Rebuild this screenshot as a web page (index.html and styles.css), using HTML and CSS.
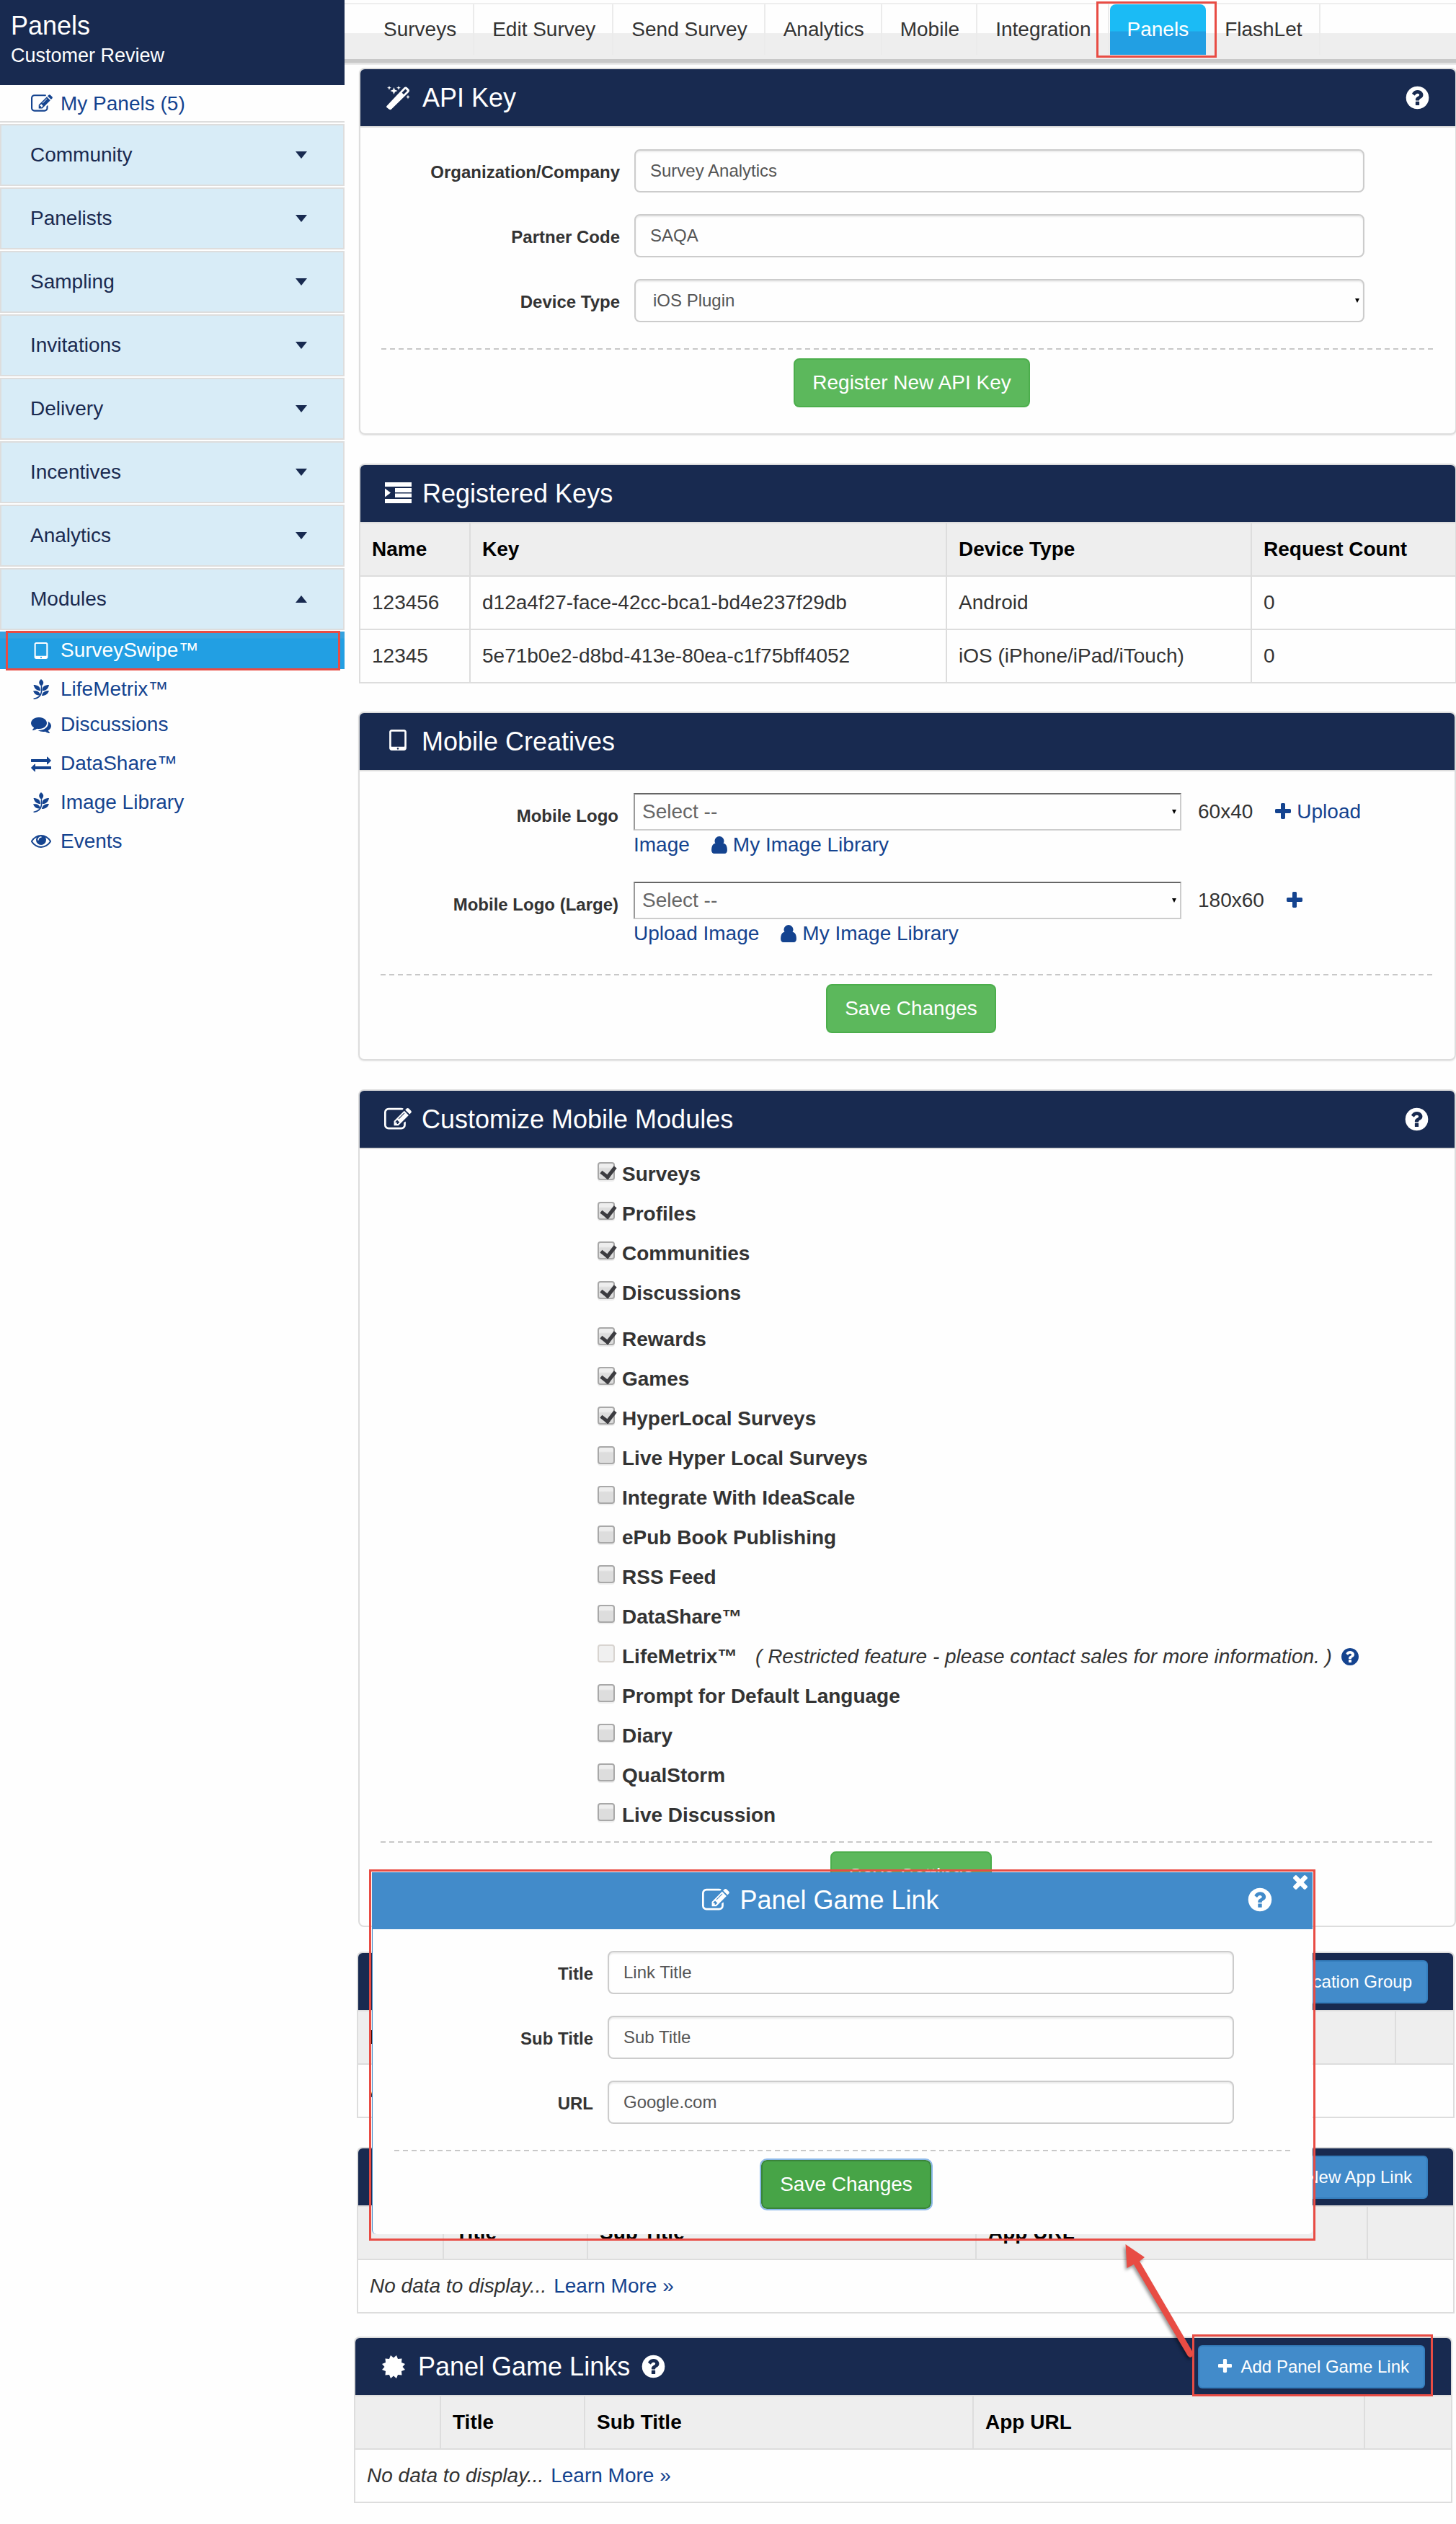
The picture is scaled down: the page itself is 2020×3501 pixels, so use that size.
FILE: index.html
```html
<!DOCTYPE html>
<html lang="en">
<head>
    <meta charset="UTF-8">
    <title>Panels - Customer Review</title>
    <link rel="stylesheet" href="styles.css">
</head>
<body>
    <!-- icon set -->
    <svg class="sprite" width="0" height="0">
        <symbol id="i-edit" viewBox="0 0 1792 1792"><path d="M888 1184l116-116-152-152-116 116v56h96v96h56zm440-720q-16-16-33 1l-350 350q-17 17-1 33t33-1l350-350q17-17 1-33zm80 594v190q0 119-84.5 203.5t-203.5 84.5h-832q-119 0-203.5-84.5t-84.5-203.5v-832q0-119 84.5-203.5t203.5-84.5h832q63 0 117 25 15 7 18 23 3 17-9 29l-49 49q-14 14-32 8-23-6-45-6h-832q-66 0-113 47t-47 113v832q0 66 47 113t113 47h832q66 0 113-47t47-113v-126q0-13 9-22l64-64q15-15 35-7t20 29zm-96-738l288 288-672 672h-288v-288zm444 132l-92 92-288-288 92-92q28-28 68-28t68 28l152 152q28 28 28 68t-28 68z"/></symbol>
        <symbol id="i-help" viewBox="0 0 1792 1792"><path d="M1024 1376v-192q0-14-9-23t-23-9h-192q-14 0-23 9t-9 23v192q0 14 9 23t23 9h192q14 0 23-9t9-23zm256-672q0-88-55.5-163t-138.5-116-170-41q-243 0-371 213-15 24 8 42l132 100q7 6 19 6 16 0 25-12 53-68 86-92 34-24 86-24 48 0 85.5 26t37.5 59q0 38-20 61t-68 45q-63 28-115.5 86.5t-52.5 125.5v36q0 14 9 23t23 9h192q14 0 23-9t9-23q0-19 21.5-49.5t54.5-49.5q32-18 49-28.5t46-35 44.5-48 28-60.5 12.5-81zm384 192q0 209-103 385.5t-279.5 279.5-385.5 103-385.5-103-279.5-279.5-103-385.5 103-385.5 279.5-279.5 385.5-103 385.5 103 279.5 279.5 103 385.5z"/></symbol>
        <symbol id="i-plus" viewBox="192 128 1408 1408"><path d="M1600 736v192q0 40-28 68t-68 28h-416v416q0 40-28 68t-68 28h-192q-40 0-68-28t-28-68v-416h-416q-40 0-68-28t-28-68v-192q0-40 28-68t68-28h416v-416q0-40 28-68t68-28h192q40 0 68 28t28 68v416h416q40 0 68 28t28 68z"/></symbol>
        <symbol id="i-user" viewBox="256 256 1280 1408"><path d="M1536 1399q0 109-62.5 187t-150.5 78h-854q-88 0-150.5-78t-62.5-187q0-85 8.500-160.500t31.500-152 58.500-131 94-89 134.500-34.500q131 128 313 128t313-128q76 0 134.500 34.500t94 89 58.500 131 31.500 152 8.500 160.500zm-256-759q0 159-112.500 271.500t-271.500 112.500-271.500-112.500-112.500-271.500 112.500-271.500 271.500-112.500 271.500 112.500 112.500 271.500z"/></symbol>
        <symbol id="i-tablet" viewBox="320 128 1152 1408"><path d="M960 1408q0-26-19-45t-45-19-45 19-19 45 19 45 45 19 45-19 19-45zm384-160v-960q0-13-9.5-22.5t-22.5-9.5h-832q-13 0-22.5 9.500t-9.500 22.500v960q0 13 9.500 22.500t22.500 9.500h832q13 0 22.500-9.500t9.500-22.500zm128-960v1088q0 66-47 113t-113 47h-832q-66 0-113-47t-47-113v-1088q0-66 47-113t113-47h832q66 0 113 47t47 113z"/></symbol>
        <symbol id="i-times" viewBox="302 366 1188 1188"><path d="M1490 1322q0 40-28 68l-136 136q-28 28-68 28t-68-28l-294-294-294 294q-28 28-68 28t-68-28l-136-136q-28-28-28-68t28-68l294-294-294-294q-28-28-28-68t28-68l136-136q28-28 68-28t68 28l294 294 294-294q28-28 68-28t68 28l136 136q28 28 28 68t-28 68l-294 294 294 294q28 28 28 68z"/></symbol>
        <symbol id="i-eye" viewBox="0 64 1792 1792"><path d="M1664 960q-152-236-381-353 61 104 61 225 0 185-131.500 316.500t-316.500 131.500-316.500-131.500-131.500-316.500q0-121 61-225-229 117-381 353 133 205 333.500 326.500t434.500 121.500 434.500-121.500 333.500-326.500zm-720-384q0-20-14-34t-34-14q-125 0-214.500 89.500t-89.500 214.500q0 20 14 34t34 14 34-14 14-34q0-86 61-147t147-61q20 0 34-14t14-34zm848 384q0 34-20 69-140 230-376.500 368.500t-499.500 138.500-499.500-139-376.500-368q-20-35-20-69t20-69q140-229 376.500-368t499.500-139 499.500 139 376.500 368q20 35 20 69z"/></symbol>
        <symbol id="i-exchange" viewBox="0 0 1792 1792"><path d="M1792 1184v192q0 13-9.5 22.500t-22.500 9.500h-1376v192q0 13-9.500 22.500t-22.500 9.500q-12 0-24-10l-319-320q-9-9-9-22 0-14 9-23l320-320q9-9 23-9 13 0 22.500 9.500t9.500 22.500v192h1376q13 0 22.500 9.500t9.500 22.500zm0-544q0 14-9 23l-320 320q-9 9-23 9-13 0-22.500-9.500t-9.500-22.500v-192h-1376q-13 0-22.500-9.500t-9.500-22.500v-192q0-13 9.500-22.500t22.500-9.500h1376v-192q0-14 9-23t23-9q12 0 24 10l319 319q9 9 9 23z"/></symbol>
        <symbol id="i-comments" viewBox="0 0 1792 1792"><path d="M1408 768q0 139-94 257t-256.500 186.500-353.500 68.500q-86 0-176-16-124 88-278 128-36 9-86 16h-3q-11 0-20.500-8t-11.500-21q-1-3-1-6.500t.5-6.500 2-6l2.500-5 3.500-5.500 4-5 4.500-5 4-4.500q5-6 23-25t26-29.500 22.500-29 25-38.500 20.500-44q-124-72-195-177t-71-224q0-139 94-257t256.500-186.500 353.500-68.500 353.500 68.500 256.500 186.500 94 257zm384 256q0 120-71 224.500t-195 176.500q10 24 20.500 44t25 38.500 22.500 29 26 29.500 23 25q1 1 4 4.500t4.500 5 4 5 3.500 5.500l2.500 5 2 6 .5 6.500-1 6.500q-3 14-13 22t-22 7q-50-7-86-16-154-40-278-128-90 16-176 16-271 0-472-132 58 4 88 4 161 0 309-45t264-129q125-92 192-212t67-254q0-77-23-152 129 71 204 178t75 230z"/></symbol>
        <symbol id="i-leaf" viewBox="0 0 22 28"><path d="M11 0c4 3 4.500 6 0.500 10c-4-3-4.500-7-0.500-10zM12.500 16c0-6 4-8 9.500-8c-1 6-5 8.500-9.500 8zM10 16c-4.500 0-8-2-9.500-8c5 0 9.500 2 9.500 8zM12 23c1-5.500 5-7 10-7c-2 6-6 7-10 7zM10 22c-4 1.500-8-0.500-10-5.500c5-1 9 1 10 5.500z"/><path d="M11.500 10V18Q10 26 0.500 27.500" fill="none" stroke="currentColor" stroke-width="1.600"/></symbol>
        <symbol id="i-wand" viewBox="0 0 36 34"><path fill-rule="evenodd" d="M1.500 28L25.500 2.500Q28 0.500 30 2.500L32.500 5Q34 7 32 9L8 32.500Q6 34 4 32L1.500 30Q0.500 29 1.500 28zM22.500 9.500L25 12L30 7L27.500 4.500z"/><path d="M5 0l.8 2 2.200.8-2.200.8L5 6l-.8-2.400L2 2.800 4.200 2zM18 0l.8 2 2.200.8-2.200.8L18 6l-.8-2.400L15 2.800 17.200 2zM11.500 2l1.400 3.600 3.600 1.400-3.600 1.400-1.400 3.600-1.400-3.600L6.500 7l3.600-1.400zM31 12.500l.8 2.200 2.200.8-2.200.8-.8 2.200-.8-2.200-2.200-.8 2.200-.8z"/></symbol>
        <symbol id="i-indent" viewBox="0 0 37 29"><path d="M0 0h37v6H0zM14 8h23v6H14zM14 15.500h23v5.500H14zM0 23h37v6H0zM0 8.500L8 14.500L0 20.500z"/></symbol>
        <symbol id="i-cert" viewBox="-16 -16 32 32"><path d="M-4-16L0-12.500L4-16L6-11L11.500-11.500L11-6L16-4L12.500 0L16 4L11 6L11.500 11.500L6 11L4 16L0 12.500L-4 16L-6 11L-11.500 11.500L-11 6L-16 4L-12.500 0L-16-4L-11-6L-11.500-11.500L-6-11Z"/></symbol>
    </svg>

    <div class="page">
        <aside class="sidebar">
            <div class="brand">
                <h1>Panels</h1>
                <p>Customer Review</p>
            </div>
            <a class="my-panels"><svg><use href="#i-edit"/></svg>My Panels (5)</a>
            <div class="menu">
                <div class="menu-item">Community<i class="caret"></i></div>
                <div class="menu-item">Panelists<i class="caret"></i></div>
                <div class="menu-item">Sampling<i class="caret"></i></div>
                <div class="menu-item">Invitations<i class="caret"></i></div>
                <div class="menu-item">Delivery<i class="caret"></i></div>
                <div class="menu-item">Incentives<i class="caret"></i></div>
                <div class="menu-item">Analytics<i class="caret"></i></div>
                <div class="menu-item">Modules<i class="caret up"></i></div>
            </div>
            <div class="submenu">
                <a class="active"><svg class="tablet"><use href="#i-tablet"/></svg>SurveySwipe™<span class="mark"></span></a>
                <a><svg><use href="#i-leaf"/></svg>LifeMetrix™</a>
                <a class="tight"><svg><use href="#i-comments"/></svg>Discussions</a>
                <a><svg><use href="#i-exchange"/></svg>DataShare™</a>
                <a><svg><use href="#i-leaf"/></svg>Image Library</a>
                <a><svg><use href="#i-eye"/></svg>Events</a>
            </div>
        </aside>

        <main class="main">
            <nav class="topnav">
                <a>Surveys</a>
                <a>Edit Survey</a>
                <a>Send Survey</a>
                <a>Analytics</a>
                <a>Mobile</a>
                <a>Integration</a>
                <a class="active">Panels<span class="mark"></span></a>
                <a>FlashLet</a>
            </nav>

            <section class="panel api-key">
                <div class="panel-head"><svg class="wand"><use href="#i-wand"/></svg><h2>API Key</h2><svg class="help"><use href="#i-help"/></svg></div>
                <div class="panel-body">
                    <div class="row"><label>Organization/Company</label><div class="field">Survey Analytics</div></div>
                    <div class="row"><label>Partner Code</label><div class="field">SAQA</div></div>
                    <div class="row"><label>Device Type</label><div class="field drop">iOS Plugin<i class="tick"></i></div></div>
                    <div class="dashes"></div>
                    <button class="btn">Register New API Key</button>
                </div>
            </section>

            <section class="panel keys">
                <div class="panel-head"><svg class="indent"><use href="#i-indent"/></svg><h2>Registered Keys</h2></div>
                <table>
                    <colgroup><col class="c-name"><col class="c-key"><col class="c-device"><col></colgroup>
                    <tr><th>Name</th><th>Key</th><th>Device Type</th><th>Request Count</th></tr>
                    <tr><td>123456</td><td>d12a4f27-face-42cc-bca1-bd4e237f29db</td><td>Android</td><td>0</td></tr>
                    <tr><td>12345</td><td>5e71b0e2-d8bd-413e-80ea-c1f75bff4052</td><td>iOS (iPhone/iPad/iTouch)</td><td>0</td></tr>
                </table>
            </section>

            <section class="panel creatives">
                <div class="panel-head"><svg class="tablet"><use href="#i-tablet"/></svg><h2>Mobile Creatives</h2></div>
                <div class="panel-body">
                    <div class="row">
                        <label>Mobile Logo</label>
                        <div class="logo">
                            <div class="line"><div class="select">Select --<i class="tick"></i></div><span class="size">60x40</span><a><svg class="plus"><use href="#i-plus"/></svg>Upload</a></div>
                            <div class="line links"><a>Image</a><a><svg class="user"><use href="#i-user"/></svg>My Image Library</a></div>
                        </div>
                    </div>
                    <div class="row">
                        <label>Mobile Logo (Large)</label>
                        <div class="logo">
                            <div class="line"><div class="select">Select --<i class="tick"></i></div><span class="size">180x60</span><a><svg class="plus"><use href="#i-plus"/></svg></a></div>
                            <div class="line links"><a>Upload Image</a><a><svg class="user"><use href="#i-user"/></svg>My Image Library</a></div>
                        </div>
                    </div>
                    <div class="dashes"></div>
                    <button class="btn">Save Changes</button>
                </div>
            </section>

            <section class="panel modules">
                <div class="panel-head"><svg class="edit"><use href="#i-edit"/></svg><h2>Customize Mobile Modules</h2><svg class="help"><use href="#i-help"/></svg></div>
                <div class="panel-body">
                    <ul class="checks">
                        <li class="on"><i></i>Surveys</li>
                        <li class="on"><i></i>Profiles</li>
                        <li class="on"><i></i>Communities</li>
                        <li class="on"><i></i>Discussions</li>
                        <li class="on spaced"><i></i>Rewards</li>
                        <li class="on"><i></i>Games</li>
                        <li class="on"><i></i>HyperLocal Surveys</li>
                        <li><i></i>Live Hyper Local Surveys</li>
                        <li><i></i>Integrate With IdeaScale</li>
                        <li><i></i>ePub Book Publishing</li>
                        <li><i></i>RSS Feed</li>
                        <li><i></i>DataShare™</li>
                        <li class="off"><i></i>LifeMetrix™ <em>( Restricted feature - please contact sales for more information. )</em><svg><use href="#i-help"/></svg></li>
                        <li><i></i>Prompt for Default Language</li>
                        <li><i></i>Diary</li>
                        <li><i></i>QualStorm</li>
                        <li><i></i>Live Discussion</li>
                    </ul>
                    <div class="dashes"></div>
                    <button class="btn">Save Settings</button>
                </div>
            </section>

            <section class="panel groups">
                <div class="panel-head"><button class="btn-blue">New Location Group</button></div>
                <table>
                    <colgroup><col><col class="c-last-sm"></colgroup>
                    <tr><th>Name</th><th></th></tr>
                    <tr><td colspan="2">All</td></tr>
                </table>
            </section>

            <section class="panel apps">
                <div class="panel-head"><button class="btn-blue">New App Link</button></div>
                <table class="link-table">
                    <colgroup><col class="c-icon"><col class="c-title"><col class="c-sub"><col class="c-url"><col></colgroup>
                    <tr><th></th><th>Title</th><th>Sub Title</th><th>App URL</th><th></th></tr>
                    <tr><td colspan="5"><em>No data to display...</em> <a>Learn More »</a></td></tr>
                </table>
            </section>

            <section class="panel games">
                <div class="panel-head"><svg class="cert"><use href="#i-cert"/></svg><h2>Panel Game Links</h2><svg class="help"><use href="#i-help"/></svg>
                    <button class="btn-blue"><svg><use href="#i-plus"/></svg>Add Panel Game Link<span class="mark"></span></button>
                </div>
                <table class="link-table">
                    <colgroup><col class="c-icon"><col class="c-title"><col class="c-sub"><col class="c-url"><col></colgroup>
                    <tr><th></th><th>Title</th><th>Sub Title</th><th>App URL</th><th></th></tr>
                    <tr><td colspan="5"><em>No data to display...</em> <a>Learn More »</a></td></tr>
                </table>
            </section>
        </main>

        <div class="modal">
            <div class="modal-head">
                <svg class="edit"><use href="#i-edit"/></svg><h2>Panel Game Link</h2>
                <svg class="help"><use href="#i-help"/></svg>
                <svg class="close"><use href="#i-times"/></svg>
            </div>
            <div class="modal-body">
                <div class="row"><label>Title</label><div class="field">Link Title</div></div>
                <div class="row"><label>Sub Title</label><div class="field">Sub Title</div></div>
                <div class="row"><label>URL</label><div class="field">Google.com</div></div>
                <div class="dashes"></div>
                <button class="btn focus">Save Changes</button>
            </div>
        </div>
        <div class="modal-mark"></div>

        <svg class="arrow" viewBox="0 0 110 180">
            <path d="M11.500 13L38 31L31 36.500L105 163Q106 169 101 170L98 168L23 41L13.500 46Z"/>
        </svg>
    </div>
</body>
</html>
```

FILE: styles.css
```css
* {
    margin: 0;
    padding: 0;
    box-sizing: border-box;
}

body {
    font-family: "Liberation Sans", Arial, Helvetica, sans-serif;
    font-size: 28px;
    line-height: 40px;
    color: #333;
    background: #fefefe;
}

svg {
    fill: currentColor;
    flex: none;
}

.sprite {
    position: absolute;
}

a {
    color: #14438f;
}

.page {
    position: relative;
    display: flex;
    width: 2020px;
    height: 3501px;
    overflow: hidden;
}

/* red highlight boxes */
.mark,
.modal-mark {
    position: absolute;
    border: 3px solid #e84c44;
}

/* sidebar */
.sidebar {
    width: 478px;
    flex: none;
}

.brand {
    height: 118px;
    padding: 13px 15px;
    background: #182a50;
    color: #fff;
}

.brand h1 {
    font-size: 36px;
    font-weight: normal;
    line-height: 46px;
}

.brand p {
    font-size: 27px;
    line-height: 36px;
}

.my-panels {
    display: flex;
    align-items: center;
    height: 52px;
    padding: 2px 0 0 43px;
    border-bottom: 2px solid #ddd;
}

.my-panels svg {
    width: 30px;
    height: 30px;
    margin-right: 11px;
}

.menu {
    display: flex;
    flex-direction: column;
    gap: 2px;
    padding-top: 2px;
}

.menu-item {
    display: flex;
    justify-content: space-between;
    align-items: center;
    height: 86px;
    padding: 0 50px 0 40px;
    background: #d8ecf7;
    border: 2px solid #ddd;
    color: #1a2a50;
}

.caret {
    border: 8px solid transparent;
    border-top: 10px solid #182a50;
    border-bottom: 0;
}

.caret.up {
    border-top: 0;
    border-bottom: 10px solid #182a50;
}

.submenu {
    padding-top: 2px;
}

.submenu a {
    display: flex;
    align-items: center;
    height: 54px;
    padding-left: 42px;
}

.submenu svg {
    width: 30px;
    height: 28px;
    margin-right: 12px;
}

.submenu .active {
    position: relative;
    height: 52px;
    margin-bottom: 1px;
    color: #fff;
    background: linear-gradient(#35a2df 0, #35a2df 9px, #229fe3 10px);
}

.submenu .active svg {
    height: 23px;
}

.submenu .active .mark {
    inset: -1px 6px -2px 8px;
}

.submenu .tight {
    margin-top: -5px;
}

/* top navigation */
.main {
    width: 1542px;
    flex: none;
}

.topnav {
    display: flex;
    height: 90px;
    margin-bottom: 4px;
    padding: 6px 0 0 29px;
    background: linear-gradient(#fefefe 0, #fefefe 4px, #eee 4px, #eee 6px, #fefefe 6px, #fefefe 46px, #eee 46px, #eee 82px, #c8c8c8 82px, #c8c8c8 87px, #ddd 87px, #eee 90px);
}

.topnav a {
    position: relative;
    height: 70px;
    padding: 0 23px 0 25px;
    line-height: 70px;
    color: #333;
    border-right: 2px solid #ebebeb;
}

.topnav .active {
    margin: 0 1px;
    padding: 0 24px;
    color: #fff;
    border-right: 0;
    border-radius: 8px 8px 0 0;
    background: linear-gradient(#1bbbf5 37px, #229fe3 38px);
}

.topnav .active .mark {
    inset: -4px -15px -4px -19px;
}

/* panels */
.panel {
    border: 2px solid #ddd;
    border-radius: 8px;
    overflow: hidden;
}

.panel-head {
    display: flex;
    align-items: center;
    height: 81px;
    padding: 0 34px 0 35px;
    color: #fff;
    background: #182a50;
    border-bottom: 2px solid #ddd;
}

.panel-head h2,
.modal-head h2 {
    font-size: 36px;
    font-weight: normal;
}

.panel-head .help {
    width: 37px;
    height: 37px;
    margin-left: auto;
}

.panel-head .wand {
    width: 36px;
    height: 34px;
    margin-right: 15px;
}

.panel-head .indent {
    width: 37px;
    height: 29px;
    margin: 0 15px 2px -1px;
}

.panel-head .tablet {
    width: 24px;
    height: 29px;
    margin: 0 21px 4px 6px;
}

.edit {
    width: 38px;
    height: 38px;
    margin-right: 14px;
}

.panel-head .edit {
    margin-left: -1px;
}

.api-key,
.keys {
    width: 1523px;
    margin-left: 20px;
}

.api-key,
.creatives {
    box-shadow: 0 1px 2px rgba(0, 0, 0, 0.1);
}

.keys {
    margin-top: 40px;
}

.creatives,
.modules {
    width: 1523px;
    margin-left: 19px;
}

.creatives {
    margin-top: 39px;
}

.modules {
    margin-top: 40px;
}

.groups,
.apps {
    width: 1523px;
    margin-left: 17px;
}

.groups {
    margin-top: 34px;
}

.apps {
    margin-top: 40px;
}

.games {
    width: 1524px;
    margin: 32px 0 0 13px;
}

.keys,
.groups,
.apps,
.games {
    border-bottom: 0;
    border-radius: 8px 8px 0 0;
}

/* forms */
.panel-body {
    padding: 30px 18px 36px 29px;
}

.row {
    display: flex;
    gap: 20px;
    margin-bottom: 30px;
}

.row label {
    width: 331px;
    height: 60px;
    font-size: 24px;
    font-weight: bold;
    line-height: 63px;
    text-align: right;
    white-space: nowrap;
}

.field {
    position: relative;
    width: 1013px;
    height: 60px;
    padding-left: 20px;
    font-size: 24px;
    line-height: 56px;
    color: #555;
    background: #fefefe;
    border: 2px solid #ccc;
    border-radius: 8px;
    box-shadow: inset 0 2px 2px rgba(0, 0, 0, 0.075);
}

.drop {
    padding-left: 24px;
}

.tick {
    position: absolute;
    top: 50%;
    right: 5px;
    margin-top: -3px;
    border: 3px solid transparent;
    border-top: 6px solid #000;
    border-bottom: 0;
}

.dashes {
    height: 2px;
    margin: 36px 10px 12px 0;
    background: repeating-linear-gradient(90deg, #c8c8c8 0, #c8c8c8 7px, transparent 7px, transparent 12px);
}

.btn {
    display: block;
    height: 68px;
    margin: 0 auto;
    padding: 0 24px;
    font: inherit;
    color: #fff;
    background: #5cb85c;
    border: 2px solid #4cae4c;
    border-radius: 8px;
}

.creatives .row {
    gap: 21px;
    margin-bottom: 31px;
}

.creatives .row label {
    width: 330px;
    line-height: 64px;
}

.line,
.line a {
    display: flex;
    align-items: center;
}

.links {
    height: 40px;
    gap: 30px;
}

.select {
    position: relative;
    width: 760px;
    height: 52px;
    padding-left: 10px;
    line-height: 48px;
    color: #666;
    border: 2px solid #ccc;
    border-top-color: #666;
    border-left-color: #999;
}

.size {
    margin: 0 31px 0 23px;
}

.plus {
    width: 22px;
    height: 22px;
    margin-right: 8px;
    margin-bottom: 2px;
}

.user {
    width: 22px;
    height: 24px;
    margin-right: 8px;
}

/* module checkboxes */
.modules .panel-body {
    padding-top: 7px;
    padding-bottom: 35px;
}

.checks {
    list-style: none;
    padding-left: 301px;
}

.checks li {
    display: flex;
    align-items: center;
    height: 55px;
    font-weight: bold;
    white-space: pre;
}

.checks .spaced {
    margin-top: 9px;
}

.checks i {
    position: relative;
    width: 24px;
    height: 25px;
    margin: 0 10px 9px 0;
    border: 2px solid #a8a8a8;
    border-radius: 4px;
    background: linear-gradient(#eee 0, #eee 5px, #ddd 7px);
    box-shadow: 0 2px 0 #eee;
}

.checks .off i {
    border-color: #d8d4d0;
    background: #f0f0f0;
    box-shadow: none;
}

.checks .on i::after {
    content: "";
    position: absolute;
    left: 6px;
    top: 0;
    width: 9px;
    height: 15px;
    border: solid #3c3c40;
    border-width: 0 5px 5px 0;
    transform: rotate(38deg);
}

.checks em {
    margin-left: 17px;
    font-weight: normal;
}

.checks svg {
    width: 28px;
    height: 28px;
    margin-left: 11px;
    color: #14438f;
}

.modules .dashes {
    margin-top: 9px;
}

/* tables */
table {
    width: 100%;
    table-layout: fixed;
    border-spacing: 0;
}

th,
td {
    height: 74px;
    padding: 0 16px;
    text-align: left;
    border-left: 2px solid #ddd;
    border-bottom: 2px solid #ddd;
}

th:first-child,
td:first-child {
    border-left: 0;
}

td em {
    margin-right: 2px;
}

th {
    color: #000;
    background: #eee;
}

.c-name {
    width: 151px;
}

.c-key {
    width: 661px;
}

.c-device {
    width: 423px;
}

.c-last-sm {
    width: 81px;
}

.c-icon {
    width: 117px;
}

.c-title {
    width: 200px;
}

.c-sub {
    width: 539px;
}

.c-url {
    width: 543px;
}

.link-table th {
    padding: 0 0 0 16px;
}

/* header buttons */
.btn-blue {
    position: relative;
    display: flex;
    align-items: center;
    height: 60px;
    margin-left: auto;
    padding: 0 20px;
    font: inherit;
    font-size: 24px;
    color: #fff;
    background: #428bca;
    border: 2px solid #357ebd;
    border-radius: 6px;
}

.groups .panel-head,
.apps .panel-head {
    padding-right: 35px;
}

.games .cert {
    width: 32px;
    height: 32px;
    margin: 0 18px 0 2px;
}

.games .panel-head .help {
    margin-left: 14px;
}

.games,
.games .panel-head {
    overflow: visible;
}

.games .panel-head {
    padding-right: 36px;
    border-radius: 6px 6px 0 0;
}

.btn-blue svg {
    width: 19px;
    height: 19px;
    margin: 0 13px 2px 6px;
}

.btn-blue .mark {
    inset: -17px -13px -13px -10px;
}

/* modal */
.modal {
    position: absolute;
    left: 516px;
    top: 2597px;
    width: 1305px;
    height: 502px;
    background: #fefefe;
    border-left: 1px solid #428bca;
    border-radius: 0 0 6px 6px;
}

.modal-head {
    position: relative;
    display: flex;
    align-items: center;
    justify-content: center;
    height: 79px;
    padding: 0 61px 2px 0;
    color: #fff;
    background: #428bca;
}

.modal-head .help {
    position: absolute;
    right: 54px;
    top: 19px;
    width: 38px;
    height: 38px;
}

.close {
    position: absolute;
    right: 7px;
    top: 4px;
    width: 20px;
    height: 20px;
}

.modal-body {
    padding: 30px 20px 35px 30px;
}

.modal .row label {
    width: 276px;
}

.modal .field {
    width: 869px;
}

.btn.focus {
    width: 236px;
    background: #47a447;
    border-color: #398439;
    outline: 2px solid #8bb8e8;
}

.modal-mark {
    left: 512px;
    top: 2593px;
    width: 1313px;
    height: 515px;
}

.arrow {
    position: absolute;
    left: 1550px;
    top: 3100px;
    width: 110px;
    height: 180px;
    fill: #e84c44;
    filter: drop-shadow(-2px 3px 2px rgba(0, 0, 0, 0.4));
}
```
